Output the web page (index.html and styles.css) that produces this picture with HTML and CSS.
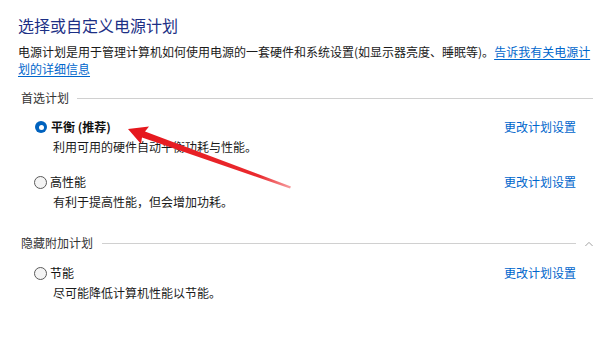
FILE: index.html
```html
<!DOCTYPE html>
<html lang="zh-CN">
<head>
<meta charset="utf-8">
<link rel="stylesheet" href="styles.css">
</head>
<body>
<div class="page">
  <h1 class="title">选择或自定义电源计划</h1>
  <p class="intro">电源计划是用于管理计算机如何使用电源的一套硬件和系统设置(如显示器亮度、睡眠等)。<a class="link" href="#">告诉我有关电源计</a><br><a class="link" href="#">划的详细信息</a></p>

  <div class="group-head">
    <span class="group-label">首选计划</span>
    <span class="rule"></span>
  </div>

  <div class="plan plan-first">
    <div class="plan-row">
      <span class="radio radio-on"></span>
      <span class="plan-name plan-bold">平衡 (推荐)</span>
      <a class="link plan-link" href="#">更改计划设置</a>
    </div>
    <div class="plan-desc">利用可用的硬件自动平衡功耗与性能。</div>
  </div>

  <div class="plan plan-second">
    <div class="plan-row">
      <span class="radio"></span>
      <span class="plan-name">高性能</span>
      <a class="link plan-link" href="#">更改计划设置</a>
    </div>
    <div class="plan-desc">有利于提高性能，但会增加功耗。</div>
  </div>

  <div class="group-head group-hidden">
    <span class="group-label">隐藏附加计划</span>
    <span class="rule rule-short"></span>
    <svg class="chevron" width="10" height="6" viewBox="0 0 10 6"><polyline points="0.5,5.5 5,1 9.5,5.5" fill="none" stroke="#8a8a8a" stroke-width="1"/></svg>
  </div>

  <div class="plan plan-third">
    <div class="plan-row">
      <span class="radio"></span>
      <span class="plan-name">节能</span>
      <a class="link plan-link" href="#">更改计划设置</a>
    </div>
    <div class="plan-desc">尽可能降低计算机性能以节能。</div>
  </div>
</div>

<svg class="arrow" width="600" height="360" viewBox="0 0 600 360">
  <defs>
    <linearGradient id="fade" x1="128" y1="129" x2="292" y2="188" gradientUnits="userSpaceOnUse">
      <stop offset="0" stop-color="#e5161c"/>
      <stop offset="0.8" stop-color="#ea2a2e"/>
      <stop offset="1" stop-color="#f7a3a5"/>
    </linearGradient>
  </defs>
  <polygon points="128,129 149,126.5 145,131.5 291,186.5 290,188.5 142,137.5 141,144" fill="url(#fade)"/>
</svg>
</body>
</html>
```

FILE: styles.css
```css
html, body {
  margin: 0;
  padding: 0;
  background: #ffffff;
}

body {
  width: 600px;
  height: 360px;
  overflow: hidden;
  position: relative;
  font-family: "Noto Sans CJK SC", "Noto Sans", sans-serif;
  font-size: 12px;
  color: #1a1a1a;
}

.page {
  padding: 14px 7px 0 18px;
}

.title {
  margin: 0;
  font-size: 16px;
  line-height: 22px;
  font-weight: normal;
  color: #1c2f85;
}

.intro {
  margin: 7px 0 0 0;
  line-height: 17px;
  width: 574px;
}

.link {
  color: #0066cc;
  text-decoration: none;
}

.intro .link {
  text-decoration: underline;
  text-underline-offset: 2px;
}

.group-head {
  display: flex;
  align-items: center;
  margin-top: 13px;
  padding-left: 3px;
  height: 16px;
  line-height: 16px;
}

.group-label {
  color: #333333;
  white-space: nowrap;
}

.rule {
  flex: 1;
  height: 1px;
  background: #d0d0d0;
  margin-left: 8px;
}

.rule-short {
  flex: 0 0 474px;
  margin-left: 9px;
}

.chevron {
  margin-left: 9px;
  margin-top: 2px;
}

.group-hidden {
  margin-top: 25px;
}

.plan-first {
  margin-top: 13px;
}

.plan-second {
  margin-top: 19px;
}

.plan-third {
  margin-top: 14px;
}

.plan-row {
  display: flex;
  align-items: center;
  height: 16px;
  line-height: 16px;
  width: 558px;
}

.radio {
  box-sizing: border-box;
  width: 13px;
  height: 13px;
  border-radius: 50%;
  border: 1px solid #5a5a5a;
  background: #f4f4f4;
  margin-left: 16px;
  margin-right: 3px;
  flex: none;
}

.radio-on {
  width: 12px;
  height: 12px;
  border: none;
  background: #0062be;
  position: relative;
  margin-left: 17px;
  margin-right: 4px;
}

.radio-on::after {
  content: "";
  position: absolute;
  left: 3.5px;
  top: 3.5px;
  width: 5px;
  height: 5px;
  border-radius: 50%;
  background: #ffffff;
}

.plan-name {
  color: #111111;
}

.plan-bold {
  font-weight: bold;
}

.plan-link {
  margin-left: auto;
}

.plan-desc {
  margin-top: 4px;
  margin-left: 35px;
  line-height: 16px;
  color: #1a1a1a;
}

.arrow {
  position: absolute;
  left: 0;
  top: 0;
  pointer-events: none;
}
```
